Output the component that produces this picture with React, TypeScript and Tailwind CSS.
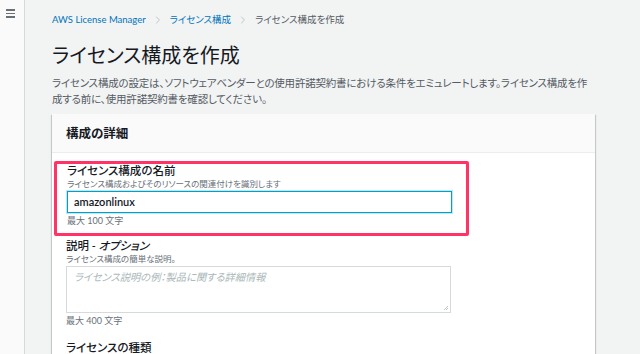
import { ChevronRight } from "lucide-react";

const font = {
  fontFamily: 'Lato, "Noto Sans CJK JP", sans-serif',
  fontFeatureSettings: '"palt"',
};

function Field({
  label,
  optional,
  hint,
  children,
  limit,
}: {
  label: string;
  optional?: boolean;
  hint: string;
  children: React.ReactNode;
  limit: string;
}) {
  return (
    <div className="flex flex-col">
      <div className="text-[11.5px] font-medium leading-[12px] text-[#16191f]">
        {label}
        {optional && <span className="italic"> - オプション</span>}
      </div>
      <div className="mt-[1px] text-[8.5px] leading-[12px] text-[#687078]">{hint}</div>
      <div className="mt-[1px]">{children}</div>
      <div className="mt-[2px] text-[9px] leading-[12px] text-[#687078]">{limit}</div>
    </div>
  );
}

export default function App() {
  return (
    <div className="flex h-[354px] w-[640px] overflow-hidden bg-[#f2f3f3]" style={font}>
      <aside className="w-[25px] shrink-0 border-r border-[#d5dbdb] bg-[#fafafa] pt-[9px]">
        <div className="ml-[6px] flex w-[9px] flex-col gap-[2px]">
          <span className="h-[1.5px] bg-[#687078]" />
          <span className="h-[1.5px] bg-[#687078]" />
          <span className="h-[1.5px] bg-[#687078]" />
        </div>
      </aside>

      <main className="flex-1 pl-[27px] pr-[45px] pt-[13px]">
        <nav className="flex items-center gap-[6px] text-[9.5px] leading-[14px]">
          <span className="text-[#0073bb]">AWS License Manager</span>
          <ChevronRight size={12} strokeWidth={1.5} className="text-[#aab7b8]" />
          <span className="text-[#0073bb]">ライセンス構成</span>
          <ChevronRight size={12} strokeWidth={1.5} className="text-[#aab7b8]" />
          <span className="text-[#545b64]">ライセンス構成を作成</span>
        </nav>

        <h1 className="mt-[15px] text-[20px] leading-[26px] text-[#16191f]">ライセンス構成を作成</h1>

        <p className="mt-[7px] text-[10.5px] leading-[16px] tracking-[-0.2px] text-[#545b64]">
          ライセンス構成の設定は、ソフトウェアベンダーとの使用許諾契約書における条件をエミュレートします。ライセンス構成を作成する前に、使用許諾契約書を確認してください。
        </p>

        <section className="mt-[7px] bg-white shadow-[0_1px_1px_0_rgba(0,28,36,0.3),1px_1px_1px_0_rgba(0,28,36,0.15),-1px_1px_1px_0_rgba(0,28,36,0.15)]">
          <div className="flex h-[39px] items-center border-b border-[#eaeded] bg-[#fafafa] px-[14px] pt-[3px]">
            <h2 className="text-[12.5px] font-bold text-[#16191f]">構成の詳細</h2>
          </div>

          <div className="flex flex-col px-[2px] pt-[8px]">
            <div className="w-[415px] rounded-[2px] border-[3px] border-[#ff3366] px-[10px] pb-[6px] pt-[1px]">
              <Field
                label="ライセンス構成の名前"
                hint="ライセンス構成およびそのリソースの関連付けを識別します"
                limit="最大 100 文字"
              >
                <div className="flex h-[22px] w-[385px] items-center border border-[#00a1c9] px-[6px] text-[11px] font-semibold text-[#16191f] shadow-[0_0_0_1px_rgba(0,161,201,0.25)]">
                  amazonlinux
                </div>
              </Field>
            </div>

            <div className="mt-[4px] px-[12px]">
              <Field label="説明" optional hint="ライセンス構成の簡単な説明。" limit="最大 400 文字">
                <div className="relative h-[47px] w-[385px] border border-[#d5dbdb] px-[7px] pt-[3px] text-[10.25px] italic text-[#aab7b8]">
                  ライセンス説明の例：製品に関する詳細情報
                  <svg className="absolute bottom-[1px] right-[1px]" width="6" height="6" viewBox="0 0 6 6">
                    <path d="M5 1L1 5M5 3L3 5" stroke="#aab7b8" strokeWidth="0.8" />
                  </svg>
                </div>
              </Field>
              <div className="mt-[14px] text-[11.5px] font-medium leading-[14px] text-[#16191f]">ライセンスの種類</div>
            </div>
          </div>
        </section>
      </main>
    </div>
  );
}
